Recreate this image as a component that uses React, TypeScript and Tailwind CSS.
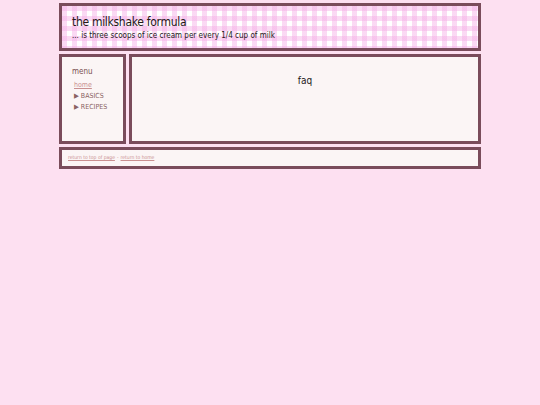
export default function App() {
  return (
    <main className="min-h-[405px] bg-[#fde0f1] pt-[3px] font-['DejaVu_Sans',sans-serif] font-stretch-condensed">
      <div className="mx-auto flex w-[422px] flex-col gap-[3px]">
        <header className="h-[48px] border-[3px] border-[#7a4c5b] bg-white bg-[linear-gradient(90deg,rgba(245,172,230,0.45)_50%,transparent_50%),linear-gradient(rgba(245,172,230,0.45)_50%,transparent_50%)] bg-[length:10px_10px] px-[10px] pt-[9px]">
          <h1 className="text-[12px] leading-[15px] tracking-[-0.3px] text-[#241818]">the milkshake formula</h1>
          <p className="mt-[1px] text-[8px] leading-[10px] text-[#241818]">
            ... is three scoops of ice cream per every 1/4 cup of milk
          </p>
        </header>

        <div className="flex h-[90px] gap-[3px]">
          <nav className="w-[67px] border-[3px] border-[#7a4c5b] bg-[#fbf5f5] px-[10px] pt-[10px] text-[7px]">
            <p className="text-[8px] leading-[10px] text-[#7a5050]">menu</p>
            <ul className="mt-[3px] text-[#8a6262]">
              <li className="h-[11px] pl-[2px] leading-[11px]">
                <a href="#" className="text-[#c99090] underline">home</a>
              </li>
              <li className="h-[11px] pl-[2px] leading-[11px]">▶ BASICS</li>
              <li className="h-[11px] pl-[2px] leading-[11px]">▶ RECIPES</li>
            </ul>
          </nav>
          <section className="flex-1 border-[3px] border-[#7a4c5b] bg-[#fbf5f5] pt-[16px] text-center">
            <h2 className="text-[10px] text-[#241818]">faq</h2>
          </section>
        </div>

        <footer className="flex h-[22px] items-center border-[3px] border-[#7a4c5b] bg-[#fbf5f5] px-[6px] text-[5px] text-[#c99090]">
          <a href="#" className="underline">return to top of page</a>
          <span className="mx-[2px]">-</span>
          <a href="#" className="underline">return to home</a>
        </footer>
      </div>
    </main>
  );
}
